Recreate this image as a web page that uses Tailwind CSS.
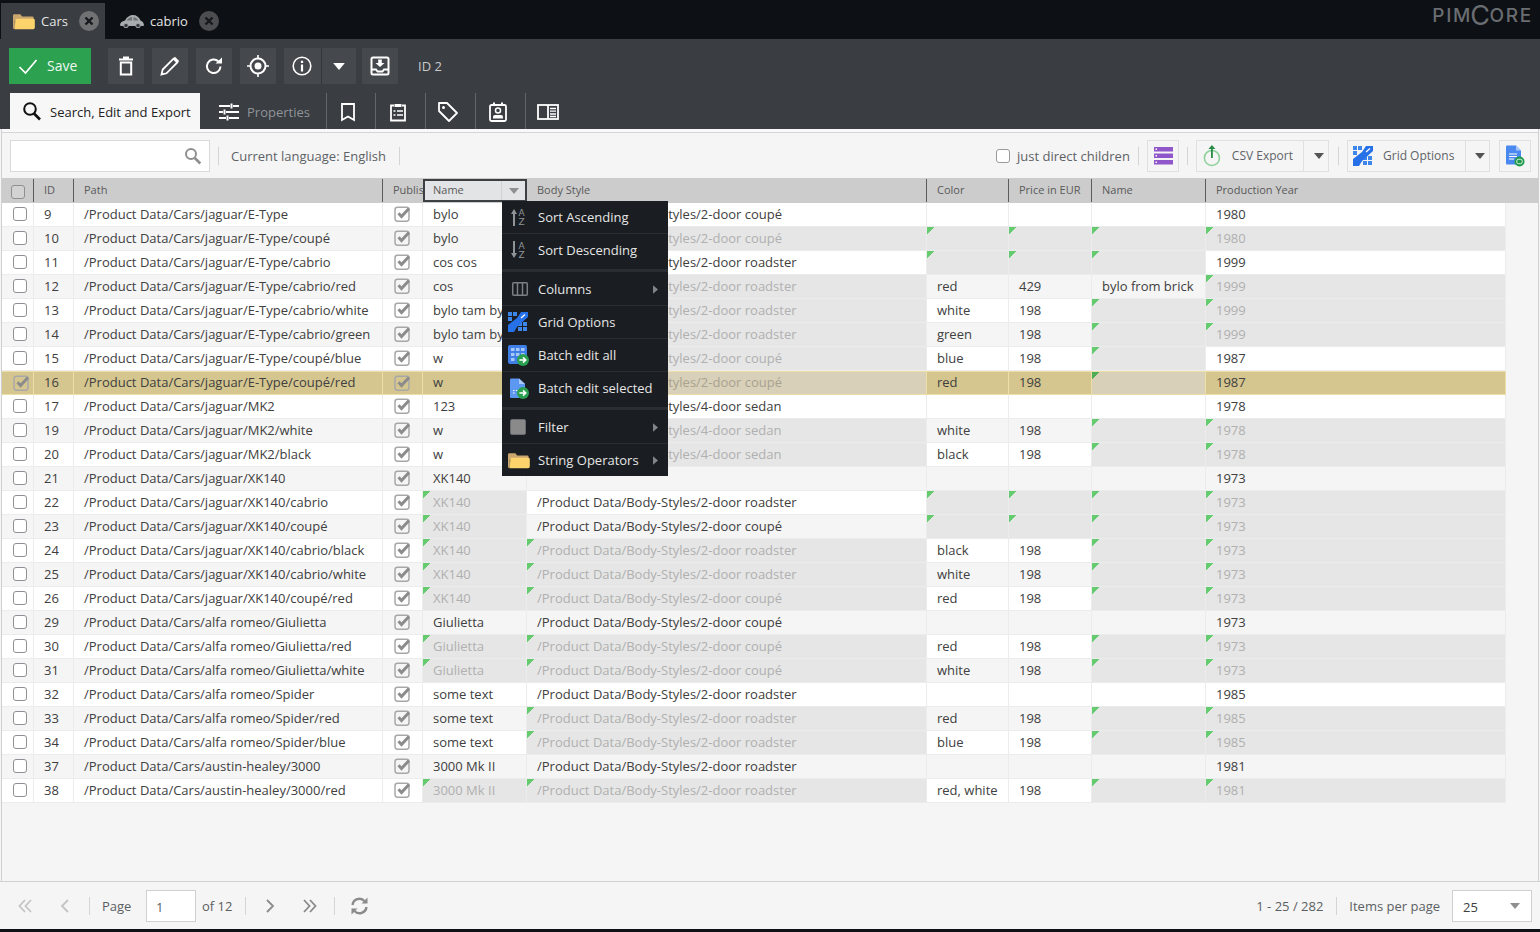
<!DOCTYPE html>
<html lang="en">
<head>
<meta charset="utf-8">
<title>Pimcore</title>
<script src="https://cdn.jsdelivr.net/npm/@tailwindcss/browser@4"></script>
</head>
<body class="m-0 bg-[#0d1014]">
<svg class="hidden" xmlns="http://www.w3.org/2000/svg">
  <symbol id="folder" viewBox="0 0 24 18"><path d="M0 2.500Q0 1 1.500 1H8l2 2.500h11Q22.500 3.500 22.500 5v3H2v9H1Q0 17 0 16z" fill="#c9a76f"/><path d="M2.500 7.500Q2.800 6 4.500 6H22q1.800 0 1.800 1.500V15.500Q23.800 17.500 22 17.500H1.500Q2 16.500 2 15z" fill="#fdd36c"/></symbol>
  <symbol id="pub" viewBox="0 0 17 17"><rect x="1" y="2.300" width="14" height="14" rx="2.500" fill="none" stroke="#a8a8a8" stroke-width="1.500"/><path d="M4.500 8.300l3 3.200 7.500-8" fill="none" stroke="#8c8c8c" stroke-width="3"/></symbol>
  <symbol id="gridopt" viewBox="0 0 20 20"><path d="M0 0h4v4H0zM5 0h4v4H5zM0 5h4v4H0zM10 10h4v4h-4zM15 10h4v4h-4zM10 15h4v4h-4zM15 15h4v4h-4z" fill="#3f86ea"/><path d="M0 13L9 6 13 0h7v5L9 15l-3 5H0z" fill="#2670e8"/><path d="M13 6l4-3.500" stroke="#fff" stroke-width="1.200"/></symbol>
  <symbol id="go" viewBox="0 0 10 10"><circle cx="5" cy="5" r="5" fill="#29a04f"/><path d="M2 5h5M5 2.800L7.300 5 5 7.200" fill="none" stroke="#fff" stroke-width="1.300"/></symbol>
  <symbol id="caret" viewBox="0 0 10 6"><path d="M0 0h10L5 6z"/></symbol>
  <symbol id="mr" viewBox="0 0 6 10"><path d="M0 0l6 5-6 5z" fill="#80858a"/></symbol>
  <symbol id="dbl" viewBox="0 0 14 14"><path d="M7 1L1.500 7 7 13M13 1L7.500 7 13 13" fill="none" stroke="currentColor" stroke-width="1.800"/></symbol>
</svg>

<div class="relative w-[1540px] h-[932px] overflow-hidden flex flex-col bg-[#f5f5f5] text-[13px] leading-[18px] text-[#404040] font-['Open_Sans',sans-serif]">

  <!-- top tabs -->
  <div class="h-[39px] shrink-0 bg-[#0d1014] flex items-end relative">
    <div class="ml-px w-[104px] h-[36px] bg-[#3a3d41] flex items-center text-[#e4e4e4]">
      <svg class="w-[22px] h-[17px] ml-3" ><use href="#folder"/></svg>
      <span class="ml-[6px]">Cars</span>
      <span class="ml-[11px] w-5 h-5 rounded-full bg-[#6f7173] flex items-center justify-center"><svg class="w-[10px] h-[10px]" viewBox="0 0 10 10"><path d="M1.500 1.500l7 7M8.500 1.500l-7 7" stroke="#16191c" stroke-width="2.400"/></svg></span>
    </div>
    <div class="h-[36px] flex items-center text-[#e4e4e4]">
      <svg class="w-[24px] h-[14px] ml-[15px]" viewBox="0 0 24 14"><path d="M0 10.500Q.5 7.500 5 6.500 8 1 13 1q5 0 7.500 5.500 3 .8 3.500 4l-.5 1.500H.5z" fill="#a9acaf"/><path d="M6.500 6.500Q9 3 12 3v3.500zM13.500 3q3 .2 5 3.500h-5z" fill="#6f7276"/><circle cx="6" cy="11.500" r="2.300" fill="#3a3d41" stroke="#a9acaf"/><circle cx="18" cy="11.500" r="2.300" fill="#3a3d41" stroke="#a9acaf"/></svg>
      <span class="ml-[6px]">cabrio</span>
      <span class="ml-[11px] w-5 h-5 rounded-full bg-[#4b4d50] flex items-center justify-center"><svg class="w-[10px] h-[10px]" viewBox="0 0 10 10"><path d="M1.500 1.500l7 7M8.500 1.500l-7 7" stroke="#16191c" stroke-width="2.400"/></svg></span>
    </div>
    <div class="absolute right-[7px] top-[5px] text-[#6a6d71] text-[19px] leading-[22px] font-['Inter',sans-serif] font-medium tracking-[1.7px] flex items-center">PIM<span class="text-[27px] leading-[22px] font-normal mx-[-2px]">C</span>ORE</div>
  </div>

  <!-- object toolbar -->
  <div class="h-[54px] shrink-0 bg-[#3a3d41] pl-[9px] pt-[9px] flex items-start text-white">
    <div class="w-[82px] h-9 bg-[#2ca250] flex items-center pl-[9px]">
      <svg class="w-5 h-5" viewBox="0 0 20 20"><path d="M1.500 11l6 6L18.500 4" fill="none" stroke="#fff" stroke-width="1.700"/></svg>
      <span class="ml-[9px] text-sm text-[#eef7f0]">Save</span>
    </div>
    <div class="ml-[17px] w-9 h-9 bg-[#45484c] flex items-center justify-center">
      <svg class="w-5 h-5" viewBox="0 0 20 20"><path d="M3 3.500h14M7 1.500h6" stroke="#fff" stroke-width="2" fill="none"/><path d="M4.800 6.500h10.400v12H4.800z" stroke="#fff" stroke-width="2" fill="none"/></svg>
    </div>
    <div class="ml-2 w-9 h-9 bg-[#45484c] flex items-center justify-center">
      <svg class="w-5 h-5" viewBox="0 0 20 20"><path d="M1.500 18.500l1.200-5L13.500 2.700l3.800 3.800L6.500 17.300z" fill="none" stroke="#fff" stroke-width="1.800"/><path d="M15 .8l4.200 4.200-1.500 1.500-4.200-4.200z" fill="#fff"/></svg>
    </div>
    <div class="ml-2 w-9 h-9 bg-[#45484c] flex items-center justify-center">
      <svg class="w-5 h-5" viewBox="0 0 20 20"><path d="M16.500 10.500a6.800 6.800 0 1 1-2.200-5.300" fill="none" stroke="#fff" stroke-width="2"/><path d="M11.500 7.500h6.500V1.500z" fill="#fff"/></svg>
    </div>
    <div class="ml-2 w-9 h-9 bg-[#45484c] flex items-center justify-center">
      <svg class="w-[22px] h-[22px]" viewBox="0 0 22 22"><circle cx="11" cy="11" r="7.500" fill="none" stroke="#fff" stroke-width="2"/><circle cx="11" cy="11" r="3.500" fill="#fff"/><path d="M11 0v3.500M11 18.500V22M0 11h3.500M18.500 11H22" stroke="#fff" stroke-width="1.600"/></svg>
    </div>
    <div class="ml-2 w-[38px] h-9 pr-px bg-[#45484c] flex items-center justify-center border-r border-[#34373a]">
      <svg class="w-5 h-5" viewBox="0 0 20 20"><circle cx="10" cy="10" r="8.800" fill="none" stroke="#fff" stroke-width="1.600"/><path d="M8.900 4.800h2.200v2.200H8.900zM8.900 8.500h2.200v7H8.900z" fill="#fff"/></svg>
    </div>
    <div class="w-[34px] h-9 bg-[#45484c] flex items-center justify-center">
      <svg class="w-[12px] h-[7px] fill-white"><use href="#caret"/></svg>
    </div>
    <div class="ml-[6px] w-9 h-9 bg-[#45484c] flex items-center justify-center">
      <svg class="w-5 h-5" viewBox="0 0 20 20"><rect x="1.500" y="1.500" width="17" height="17" rx="1.500" fill="none" stroke="#fff" stroke-width="2"/><path d="M8.200 3.500h3.600v3.500h2.700L10 11 5.500 7h2.700z" fill="#fff"/><path d="M2 13.500h4l1.500 2h5l1.500-2h4" fill="none" stroke="#fff" stroke-width="1.800"/></svg>
    </div>
    <span class="ml-5 mt-[9px] text-[#c9cbcd]">ID 2</span>
  </div>

  <!-- sub tabs -->
  <div class="h-[36px] shrink-0 bg-[#3a3d41] pl-[10px] flex items-stretch">
    <div class="w-[190px] bg-[#f7f7f7] flex items-center pl-3 text-[#222]">
      <svg class="w-5 h-5" viewBox="0 0 20 20"><circle cx="8" cy="8" r="5.800" fill="none" stroke="#111" stroke-width="2"/><path d="M12 12.500l6 6" stroke="#111" stroke-width="2.600"/></svg>
      <span class="ml-2 mt-[2px]">Search, Edit and Export</span>
    </div>
    <div class="w-[127px] flex items-center border-r border-[#63666a] pl-[19px] text-[#8f9499]">
      <svg class="w-5 h-5 mt-px" viewBox="0 0 20 20"><path d="M0 4h11M14 4h6M0 10h4M7 10h13M0 16h7M10 16h10M12.500 1.500v5M5.500 7.500v5M8.500 13.500v5" stroke="#fff" stroke-width="2" fill="none"/></svg>
      <span class="ml-2 mt-[2px]">Properties</span>
    </div>
    <div class="w-[49px] pr-[6px] pt-px flex items-center justify-center border-r border-[#63666a]">
      <svg class="w-5 h-5" viewBox="0 0 20 20"><path d="M4 2h12v16l-6-3.500L4 18z" fill="none" stroke="#fff" stroke-width="1.800"/></svg>
    </div>
    <div class="w-[50px] pr-[6px] pt-px flex items-center justify-center border-r border-[#63666a]">
      <svg class="w-5 h-5" viewBox="0 0 20 20"><path d="M6 3.500H3v15h14v-15h-3" fill="none" stroke="#fff" stroke-width="1.800"/><path d="M6.500 2h7v3h-7z" fill="#fff"/><path d="M5.500 9h2M9 9h6M5.500 13h2M9 13h6" stroke="#fff" stroke-width="1.500"/></svg>
    </div>
    <div class="w-[50px] pr-[6px] pt-px flex items-center justify-center border-r border-[#63666a]">
      <svg class="w-[22px] h-[22px]" viewBox="0 0 22 22"><path d="M2 2h8l10 10-8 8L2 10z" fill="none" stroke="#fff" stroke-width="1.800" stroke-linejoin="round"/><circle cx="6.500" cy="6.500" r="1.500" fill="#fff"/></svg>
    </div>
    <div class="w-[50px] pr-[6px] pt-px flex items-center justify-center border-r border-[#63666a]">
      <svg class="w-5 h-5" viewBox="0 0 20 20"><rect x="2" y="3" width="16" height="16" rx="1.500" fill="none" stroke="#fff" stroke-width="1.800"/><path d="M6 .5v3M14 .5v3" stroke="#fff" stroke-width="2"/><circle cx="10" cy="8.500" r="2.500" fill="none" stroke="#fff" stroke-width="1.500"/><path d="M5 16.500v-1.500q0-2 2-2h6q2 0 2 2v1.500z" fill="#fff"/></svg>
    </div>
    <div class="w-[48px] pr-[4px] pt-px flex items-center justify-center">
      <svg class="w-[22px] h-[18px]" viewBox="0 0 22 18"><rect x="1" y="2" width="20" height="14" fill="none" stroke="#fff" stroke-width="1.800"/><path d="M11 2v14" stroke="#fff" stroke-width="1.800"/><path d="M13 5.500h6M13 8.200h6M13 11h6M13 13.500h6" stroke="#fff" stroke-width="1.300"/></svg>
    </div>
  </div>

  <!-- panel -->
  <div class="flex-1 min-h-0 flex flex-col mx-px border-x border-[#d0d0d0]">
    <div class="h-[3px] shrink-0 bg-[#f9f9f9] border-b border-[#d5d5d5] box-content"></div>

    <!-- grid toolbar -->
    <div class="h-[45px] shrink-0 pl-2 pr-[7px] pt-[7px] flex items-start text-[#606468]">
      <div class="w-[200px] h-8 bg-white border border-[#d9d9d9] flex items-center justify-end pr-[7px]">
        <svg class="w-[18px] h-[18px]" viewBox="0 0 18 18"><circle cx="7" cy="7" r="5" fill="none" stroke="#8f8f8f" stroke-width="2"/><path d="M10.800 11l5.500 5.500" stroke="#8f8f8f" stroke-width="2.600"/></svg>
      </div>
      <span class="ml-2 mt-[7px] w-px h-[18px] bg-[#d5d5d5]"></span>
      <span class="ml-3 mt-[7px] w-[156px] text-[#5e6266]">Current language: English</span>
      <span class="ml-3 mt-[7px] w-px h-[18px] bg-[#d5d5d5]"></span>

      <span class="ml-auto mt-[9px] w-[14px] h-[14px] bg-white border-[1.5px] border-[#9a9a9a] rounded-[3px]"></span>
      <span class="ml-[7px] mt-[7px] w-[113px] whitespace-nowrap text-[#5e6266]">just direct children</span>
      <span class="ml-[8px] mt-[7px] w-px h-[18px] bg-[#d5d5d5]"></span>
      <div class="ml-2 w-8 h-8 border border-[#e0e0e0] flex items-center justify-center">
        <svg class="w-[19px] h-[18px]" viewBox="0 0 19 18"><path d="M0 0h19v4.500H0zM0 6.500h19V11H0zM0 13h19v4.500H0z" fill="#8f57c9"/><path d="M1.500 1.500h1.500V3H1.500zM1.500 8h1.500v1.500H1.500zM1.500 14.500h1.500V16H1.500z" fill="#fff"/></svg>
      </div>
      <span class="ml-2 mt-[7px] w-px h-[18px] bg-[#d5d5d5]"></span>
      <div class="ml-2 w-[133px] h-8 border border-[#e0e0e0] flex items-center text-xs">
        <svg class="ml-[6px] w-[18px] h-[24px]" viewBox="0 0 18 24"><circle cx="9" cy="14" r="7.600" fill="none" stroke="#8ed19b" stroke-width="1.600"/><path d="M9 14V3" stroke="#268a45" stroke-width="1.800"/><path d="M5.500 5L9 .8 12.500 5z" fill="#268a45"/></svg>
        <span class="ml-[11px] w-[72px] whitespace-nowrap">CSV Export</span>
        <span class="w-[25px] h-full pl-[5px] border-l border-[#e0e0e0] flex items-center justify-center"><svg class="w-[10px] h-[6px] fill-[#555]"><use href="#caret"/></svg></span>
      </div>
      <span class="ml-[9px] mt-[7px] w-px h-[18px] bg-[#d5d5d5]"></span>
      <div class="ml-2 w-[143px] h-8 border border-[#e0e0e0] flex items-center text-xs">
        <svg class="ml-[5px] w-5 h-5"><use href="#gridopt"/></svg>
        <span class="ml-[10px] w-[82px] whitespace-nowrap">Grid Options</span>
        <span class="w-[24px] h-full pl-[4px] border-l border-[#e0e0e0] flex items-center justify-center"><svg class="w-[10px] h-[6px] fill-[#555]"><use href="#caret"/></svg></span>
      </div>
      <div class="ml-[9px] w-8 h-8 border border-[#e0e0e0] flex items-center justify-center">
        <svg class="w-5 h-[22px]" viewBox="0 0 20 22"><path d="M1 1.500Q1 .5 2 .5h9l5 5v14H2q-1 0-1-1z" fill="#4a8af0"/><path d="M11 .5l5 5h-5z" fill="#a9c8f8"/><path d="M4 9h8M4 11.500h8M4 14h5" stroke="#fff" stroke-width="1"/><circle cx="14.500" cy="16.500" r="5" fill="#1f9a4c"/><rect x="11.800" y="14.300" width="5.400" height="4.400" rx="1.500" fill="none" stroke="#d7f3df" stroke-width="1"/></svg>
      </div>
    </div>

    <!-- header -->
    <div class="h-[25px] shrink-0 bg-[#cccccc] flex text-[11px] leading-[22px] text-[#5a5a5a] whitespace-nowrap">
      <div class="w-[32px] border-r border-[#5a5d60] my-px flex items-center"><span class="ml-[9px] mt-[2px] w-[14px] h-[14px] bg-[#d3d3d3] border-[1.5px] border-[#8f8f8f] rounded-[3px]"></span></div>
      <div class="w-[40px] border-r border-[#5a5d60] my-px pl-[10px]">ID</div>
      <div class="w-[309px] border-r border-[#5a5d60] my-px pl-[10px]">Path</div>
      <div class="w-[40px] my-px pl-[10px] overflow-hidden">Published</div>
      <div class="w-[104px] border-2 border-[#3d4043] bg-[#e2e4e5] flex leading-[18px] my-px">
        <span class="flex-1 pl-2">Name</span>
        <span class="w-[24px] border-l border-[#cfd1d3] flex items-center justify-center"><svg class="w-[10px] h-[6px] fill-[#8f8f8f]"><use href="#caret"/></svg></span>
      </div>
      <div class="w-[400px] border-r border-[#5a5d60] my-px pl-[10px]">Body Style</div>
      <div class="w-[82px] border-r border-[#5a5d60] my-px pl-[10px]">Color</div>
      <div class="w-[83px] border-r border-[#5a5d60] my-px pl-[10px]">Price in EUR</div>
      <div class="w-[114px] border-r border-[#5a5d60] my-px pl-[10px]">Name</div>
      <div class="w-[300px] pl-[10px] my-px">Production Year</div>
    </div>

    <!-- rows -->
    <div class="flex-1 min-h-0 overflow-hidden">
      <table class="table-fixed w-[1504px] border-separate border-spacing-0 whitespace-nowrap [&_td]:h-6 [&_td]:px-[10px] [&_td]:pt-0 [&_td]:pb-[2px] [&_td]:border-r [&_td]:border-b [&_td]:border-[#ececec] [&_td]:overflow-hidden">
        <colgroup><col class="w-[32px]"><col class="w-[40px]"><col class="w-[309px]"><col class="w-[40px]"><col class="w-[104px]"><col class="w-[400px]"><col class="w-[82px]"><col class="w-[83px]"><col class="w-[114px]"><col class="w-[300px]"></colgroup>
        <tbody>
<tr class="bg-white"><td><span class="block ml-px w-[14px] h-[14px] bg-white border-[1.5px] border-[#8f8f95] rounded-[3px]"></span></td><td>9</td><td>/Product Data/Cars/jaguar/E-Type</td><td><svg class="block ml-px w-[17px] h-[17px]"><use href="#pub"/></svg></td><td>bylo</td><td>/Product Data/Body-Styles/2-door coupé</td><td></td><td></td><td></td><td>1980</td></tr>
<tr class="bg-[#f5f5f5]"><td><span class="block ml-px w-[14px] h-[14px] bg-white border-[1.5px] border-[#8f8f95] rounded-[3px]"></span></td><td>10</td><td>/Product Data/Cars/jaguar/E-Type/coupé</td><td><svg class="block ml-px w-[17px] h-[17px]"><use href="#pub"/></svg></td><td>bylo</td><td class="bg-[linear-gradient(135deg,#64cc6e_5px,#e6e6e6_5px)] text-[#b0b0b0]">/Product Data/Body-Styles/2-door coupé</td><td class="bg-[linear-gradient(135deg,#64cc6e_5px,#e6e6e6_5px)] text-[#b0b0b0]"></td><td class="bg-[linear-gradient(135deg,#64cc6e_5px,#e6e6e6_5px)] text-[#b0b0b0]"></td><td class="bg-[linear-gradient(135deg,#64cc6e_5px,#e6e6e6_5px)] text-[#b0b0b0]"></td><td class="bg-[linear-gradient(135deg,#64cc6e_5px,#e6e6e6_5px)] text-[#b0b0b0]">1980</td></tr>
<tr class="bg-white"><td><span class="block ml-px w-[14px] h-[14px] bg-white border-[1.5px] border-[#8f8f95] rounded-[3px]"></span></td><td>11</td><td>/Product Data/Cars/jaguar/E-Type/cabrio</td><td><svg class="block ml-px w-[17px] h-[17px]"><use href="#pub"/></svg></td><td>cos cos</td><td>/Product Data/Body-Styles/2-door roadster</td><td class="bg-[linear-gradient(135deg,#64cc6e_5px,#e6e6e6_5px)] text-[#b0b0b0]"></td><td class="bg-[linear-gradient(135deg,#64cc6e_5px,#e6e6e6_5px)] text-[#b0b0b0]"></td><td class="bg-[linear-gradient(135deg,#64cc6e_5px,#e6e6e6_5px)] text-[#b0b0b0]"></td><td>1999</td></tr>
<tr class="bg-[#f5f5f5]"><td><span class="block ml-px w-[14px] h-[14px] bg-white border-[1.5px] border-[#8f8f95] rounded-[3px]"></span></td><td>12</td><td>/Product Data/Cars/jaguar/E-Type/cabrio/red</td><td><svg class="block ml-px w-[17px] h-[17px]"><use href="#pub"/></svg></td><td>cos</td><td class="bg-[linear-gradient(135deg,#64cc6e_5px,#e6e6e6_5px)] text-[#b0b0b0]">/Product Data/Body-Styles/2-door roadster</td><td>red</td><td>429</td><td>bylo from brick</td><td class="bg-[linear-gradient(135deg,#64cc6e_5px,#e6e6e6_5px)] text-[#b0b0b0]">1999</td></tr>
<tr class="bg-white"><td><span class="block ml-px w-[14px] h-[14px] bg-white border-[1.5px] border-[#8f8f95] rounded-[3px]"></span></td><td>13</td><td>/Product Data/Cars/jaguar/E-Type/cabrio/white</td><td><svg class="block ml-px w-[17px] h-[17px]"><use href="#pub"/></svg></td><td>bylo tam bylo</td><td class="bg-[linear-gradient(135deg,#64cc6e_5px,#e6e6e6_5px)] text-[#b0b0b0]">/Product Data/Body-Styles/2-door roadster</td><td>white</td><td>198</td><td class="bg-[linear-gradient(135deg,#64cc6e_5px,#e6e6e6_5px)] text-[#b0b0b0]"></td><td class="bg-[linear-gradient(135deg,#64cc6e_5px,#e6e6e6_5px)] text-[#b0b0b0]">1999</td></tr>
<tr class="bg-[#f5f5f5]"><td><span class="block ml-px w-[14px] h-[14px] bg-white border-[1.5px] border-[#8f8f95] rounded-[3px]"></span></td><td>14</td><td>/Product Data/Cars/jaguar/E-Type/cabrio/green</td><td><svg class="block ml-px w-[17px] h-[17px]"><use href="#pub"/></svg></td><td>bylo tam bylo</td><td class="bg-[linear-gradient(135deg,#64cc6e_5px,#e6e6e6_5px)] text-[#b0b0b0]">/Product Data/Body-Styles/2-door roadster</td><td>green</td><td>198</td><td class="bg-[linear-gradient(135deg,#64cc6e_5px,#e6e6e6_5px)] text-[#b0b0b0]"></td><td class="bg-[linear-gradient(135deg,#64cc6e_5px,#e6e6e6_5px)] text-[#b0b0b0]">1999</td></tr>
<tr class="bg-white"><td><span class="block ml-px w-[14px] h-[14px] bg-white border-[1.5px] border-[#8f8f95] rounded-[3px]"></span></td><td>15</td><td>/Product Data/Cars/jaguar/E-Type/coupé/blue</td><td><svg class="block ml-px w-[17px] h-[17px]"><use href="#pub"/></svg></td><td>w</td><td class="bg-[linear-gradient(135deg,#64cc6e_5px,#e6e6e6_5px)] text-[#b0b0b0]">/Product Data/Body-Styles/2-door coupé</td><td>blue</td><td>198</td><td class="bg-[linear-gradient(135deg,#64cc6e_5px,#e6e6e6_5px)] text-[#b0b0b0]"></td><td>1987</td></tr>
<tr class="bg-[#d5c68f] [&_td]:border-[#ecdfa8]! [&_td]:border-t"><td><svg class="block ml-px w-[17px] h-[17px]"><use href="#pub"/></svg></td><td>16</td><td>/Product Data/Cars/jaguar/E-Type/coupé/red</td><td><svg class="block ml-px w-[17px] h-[17px]"><use href="#pub"/></svg></td><td>w</td><td class="bg-[linear-gradient(135deg,#64cc6e_5px,#d8d0b8_5px)] text-[#a8a290]">/Product Data/Body-Styles/2-door coupé</td><td>red</td><td>198</td><td class="bg-[linear-gradient(135deg,#4fae55_5px,#d8d0b8_5px)]"></td><td>1987</td></tr>
<tr class="bg-white"><td><span class="block ml-px w-[14px] h-[14px] bg-white border-[1.5px] border-[#8f8f95] rounded-[3px]"></span></td><td>17</td><td>/Product Data/Cars/jaguar/MK2</td><td><svg class="block ml-px w-[17px] h-[17px]"><use href="#pub"/></svg></td><td>123</td><td>/Product Data/Body-Styles/4-door sedan</td><td></td><td></td><td></td><td>1978</td></tr>
<tr class="bg-[#f5f5f5]"><td><span class="block ml-px w-[14px] h-[14px] bg-white border-[1.5px] border-[#8f8f95] rounded-[3px]"></span></td><td>19</td><td>/Product Data/Cars/jaguar/MK2/white</td><td><svg class="block ml-px w-[17px] h-[17px]"><use href="#pub"/></svg></td><td>w</td><td class="bg-[linear-gradient(135deg,#64cc6e_5px,#e6e6e6_5px)] text-[#b0b0b0]">/Product Data/Body-Styles/4-door sedan</td><td>white</td><td>198</td><td class="bg-[linear-gradient(135deg,#64cc6e_5px,#e6e6e6_5px)] text-[#b0b0b0]"></td><td class="bg-[linear-gradient(135deg,#64cc6e_5px,#e6e6e6_5px)] text-[#b0b0b0]">1978</td></tr>
<tr class="bg-white"><td><span class="block ml-px w-[14px] h-[14px] bg-white border-[1.5px] border-[#8f8f95] rounded-[3px]"></span></td><td>20</td><td>/Product Data/Cars/jaguar/MK2/black</td><td><svg class="block ml-px w-[17px] h-[17px]"><use href="#pub"/></svg></td><td>w</td><td class="bg-[linear-gradient(135deg,#64cc6e_5px,#e6e6e6_5px)] text-[#b0b0b0]">/Product Data/Body-Styles/4-door sedan</td><td>black</td><td>198</td><td class="bg-[linear-gradient(135deg,#64cc6e_5px,#e6e6e6_5px)] text-[#b0b0b0]"></td><td class="bg-[linear-gradient(135deg,#64cc6e_5px,#e6e6e6_5px)] text-[#b0b0b0]">1978</td></tr>
<tr class="bg-[#f5f5f5]"><td><span class="block ml-px w-[14px] h-[14px] bg-white border-[1.5px] border-[#8f8f95] rounded-[3px]"></span></td><td>21</td><td>/Product Data/Cars/jaguar/XK140</td><td><svg class="block ml-px w-[17px] h-[17px]"><use href="#pub"/></svg></td><td>XK140</td><td></td><td></td><td></td><td></td><td>1973</td></tr>
<tr class="bg-white"><td><span class="block ml-px w-[14px] h-[14px] bg-white border-[1.5px] border-[#8f8f95] rounded-[3px]"></span></td><td>22</td><td>/Product Data/Cars/jaguar/XK140/cabrio</td><td><svg class="block ml-px w-[17px] h-[17px]"><use href="#pub"/></svg></td><td class="bg-[linear-gradient(135deg,#64cc6e_5px,#e6e6e6_5px)] text-[#b0b0b0]">XK140</td><td>/Product Data/Body-Styles/2-door roadster</td><td class="bg-[linear-gradient(135deg,#64cc6e_5px,#e6e6e6_5px)] text-[#b0b0b0]"></td><td class="bg-[linear-gradient(135deg,#64cc6e_5px,#e6e6e6_5px)] text-[#b0b0b0]"></td><td class="bg-[linear-gradient(135deg,#64cc6e_5px,#e6e6e6_5px)] text-[#b0b0b0]"></td><td class="bg-[linear-gradient(135deg,#64cc6e_5px,#e6e6e6_5px)] text-[#b0b0b0]">1973</td></tr>
<tr class="bg-[#f5f5f5]"><td><span class="block ml-px w-[14px] h-[14px] bg-white border-[1.5px] border-[#8f8f95] rounded-[3px]"></span></td><td>23</td><td>/Product Data/Cars/jaguar/XK140/coupé</td><td><svg class="block ml-px w-[17px] h-[17px]"><use href="#pub"/></svg></td><td class="bg-[linear-gradient(135deg,#64cc6e_5px,#e6e6e6_5px)] text-[#b0b0b0]">XK140</td><td>/Product Data/Body-Styles/2-door coupé</td><td class="bg-[linear-gradient(135deg,#64cc6e_5px,#e6e6e6_5px)] text-[#b0b0b0]"></td><td class="bg-[linear-gradient(135deg,#64cc6e_5px,#e6e6e6_5px)] text-[#b0b0b0]"></td><td class="bg-[linear-gradient(135deg,#64cc6e_5px,#e6e6e6_5px)] text-[#b0b0b0]"></td><td class="bg-[linear-gradient(135deg,#64cc6e_5px,#e6e6e6_5px)] text-[#b0b0b0]">1973</td></tr>
<tr class="bg-white"><td><span class="block ml-px w-[14px] h-[14px] bg-white border-[1.5px] border-[#8f8f95] rounded-[3px]"></span></td><td>24</td><td>/Product Data/Cars/jaguar/XK140/cabrio/black</td><td><svg class="block ml-px w-[17px] h-[17px]"><use href="#pub"/></svg></td><td class="bg-[linear-gradient(135deg,#64cc6e_5px,#e6e6e6_5px)] text-[#b0b0b0]">XK140</td><td class="bg-[linear-gradient(135deg,#64cc6e_5px,#e6e6e6_5px)] text-[#b0b0b0]">/Product Data/Body-Styles/2-door roadster</td><td>black</td><td>198</td><td class="bg-[linear-gradient(135deg,#64cc6e_5px,#e6e6e6_5px)] text-[#b0b0b0]"></td><td class="bg-[linear-gradient(135deg,#64cc6e_5px,#e6e6e6_5px)] text-[#b0b0b0]">1973</td></tr>
<tr class="bg-[#f5f5f5]"><td><span class="block ml-px w-[14px] h-[14px] bg-white border-[1.5px] border-[#8f8f95] rounded-[3px]"></span></td><td>25</td><td>/Product Data/Cars/jaguar/XK140/cabrio/white</td><td><svg class="block ml-px w-[17px] h-[17px]"><use href="#pub"/></svg></td><td class="bg-[linear-gradient(135deg,#64cc6e_5px,#e6e6e6_5px)] text-[#b0b0b0]">XK140</td><td class="bg-[linear-gradient(135deg,#64cc6e_5px,#e6e6e6_5px)] text-[#b0b0b0]">/Product Data/Body-Styles/2-door roadster</td><td>white</td><td>198</td><td class="bg-[linear-gradient(135deg,#64cc6e_5px,#e6e6e6_5px)] text-[#b0b0b0]"></td><td class="bg-[linear-gradient(135deg,#64cc6e_5px,#e6e6e6_5px)] text-[#b0b0b0]">1973</td></tr>
<tr class="bg-white"><td><span class="block ml-px w-[14px] h-[14px] bg-white border-[1.5px] border-[#8f8f95] rounded-[3px]"></span></td><td>26</td><td>/Product Data/Cars/jaguar/XK140/coupé/red</td><td><svg class="block ml-px w-[17px] h-[17px]"><use href="#pub"/></svg></td><td class="bg-[linear-gradient(135deg,#64cc6e_5px,#e6e6e6_5px)] text-[#b0b0b0]">XK140</td><td class="bg-[linear-gradient(135deg,#64cc6e_5px,#e6e6e6_5px)] text-[#b0b0b0]">/Product Data/Body-Styles/2-door coupé</td><td>red</td><td>198</td><td class="bg-[linear-gradient(135deg,#64cc6e_5px,#e6e6e6_5px)] text-[#b0b0b0]"></td><td class="bg-[linear-gradient(135deg,#64cc6e_5px,#e6e6e6_5px)] text-[#b0b0b0]">1973</td></tr>
<tr class="bg-[#f5f5f5]"><td><span class="block ml-px w-[14px] h-[14px] bg-white border-[1.5px] border-[#8f8f95] rounded-[3px]"></span></td><td>29</td><td>/Product Data/Cars/alfa romeo/Giulietta</td><td><svg class="block ml-px w-[17px] h-[17px]"><use href="#pub"/></svg></td><td>Giulietta</td><td>/Product Data/Body-Styles/2-door coupé</td><td></td><td></td><td></td><td>1973</td></tr>
<tr class="bg-white"><td><span class="block ml-px w-[14px] h-[14px] bg-white border-[1.5px] border-[#8f8f95] rounded-[3px]"></span></td><td>30</td><td>/Product Data/Cars/alfa romeo/Giulietta/red</td><td><svg class="block ml-px w-[17px] h-[17px]"><use href="#pub"/></svg></td><td class="bg-[linear-gradient(135deg,#64cc6e_5px,#e6e6e6_5px)] text-[#b0b0b0]">Giulietta</td><td class="bg-[linear-gradient(135deg,#64cc6e_5px,#e6e6e6_5px)] text-[#b0b0b0]">/Product Data/Body-Styles/2-door coupé</td><td>red</td><td>198</td><td class="bg-[linear-gradient(135deg,#64cc6e_5px,#e6e6e6_5px)] text-[#b0b0b0]"></td><td class="bg-[linear-gradient(135deg,#64cc6e_5px,#e6e6e6_5px)] text-[#b0b0b0]">1973</td></tr>
<tr class="bg-[#f5f5f5]"><td><span class="block ml-px w-[14px] h-[14px] bg-white border-[1.5px] border-[#8f8f95] rounded-[3px]"></span></td><td>31</td><td>/Product Data/Cars/alfa romeo/Giulietta/white</td><td><svg class="block ml-px w-[17px] h-[17px]"><use href="#pub"/></svg></td><td class="bg-[linear-gradient(135deg,#64cc6e_5px,#e6e6e6_5px)] text-[#b0b0b0]">Giulietta</td><td class="bg-[linear-gradient(135deg,#64cc6e_5px,#e6e6e6_5px)] text-[#b0b0b0]">/Product Data/Body-Styles/2-door coupé</td><td>white</td><td>198</td><td class="bg-[linear-gradient(135deg,#64cc6e_5px,#e6e6e6_5px)] text-[#b0b0b0]"></td><td class="bg-[linear-gradient(135deg,#64cc6e_5px,#e6e6e6_5px)] text-[#b0b0b0]">1973</td></tr>
<tr class="bg-white"><td><span class="block ml-px w-[14px] h-[14px] bg-white border-[1.5px] border-[#8f8f95] rounded-[3px]"></span></td><td>32</td><td>/Product Data/Cars/alfa romeo/Spider</td><td><svg class="block ml-px w-[17px] h-[17px]"><use href="#pub"/></svg></td><td>some text</td><td>/Product Data/Body-Styles/2-door roadster</td><td></td><td></td><td></td><td>1985</td></tr>
<tr class="bg-[#f5f5f5]"><td><span class="block ml-px w-[14px] h-[14px] bg-white border-[1.5px] border-[#8f8f95] rounded-[3px]"></span></td><td>33</td><td>/Product Data/Cars/alfa romeo/Spider/red</td><td><svg class="block ml-px w-[17px] h-[17px]"><use href="#pub"/></svg></td><td>some text</td><td class="bg-[linear-gradient(135deg,#64cc6e_5px,#e6e6e6_5px)] text-[#b0b0b0]">/Product Data/Body-Styles/2-door roadster</td><td>red</td><td>198</td><td class="bg-[linear-gradient(135deg,#64cc6e_5px,#e6e6e6_5px)] text-[#b0b0b0]"></td><td class="bg-[linear-gradient(135deg,#64cc6e_5px,#e6e6e6_5px)] text-[#b0b0b0]">1985</td></tr>
<tr class="bg-white"><td><span class="block ml-px w-[14px] h-[14px] bg-white border-[1.5px] border-[#8f8f95] rounded-[3px]"></span></td><td>34</td><td>/Product Data/Cars/alfa romeo/Spider/blue</td><td><svg class="block ml-px w-[17px] h-[17px]"><use href="#pub"/></svg></td><td>some text</td><td class="bg-[linear-gradient(135deg,#64cc6e_5px,#e6e6e6_5px)] text-[#b0b0b0]">/Product Data/Body-Styles/2-door roadster</td><td>blue</td><td>198</td><td class="bg-[linear-gradient(135deg,#64cc6e_5px,#e6e6e6_5px)] text-[#b0b0b0]"></td><td class="bg-[linear-gradient(135deg,#64cc6e_5px,#e6e6e6_5px)] text-[#b0b0b0]">1985</td></tr>
<tr class="bg-[#f5f5f5]"><td><span class="block ml-px w-[14px] h-[14px] bg-white border-[1.5px] border-[#8f8f95] rounded-[3px]"></span></td><td>37</td><td>/Product Data/Cars/austin-healey/3000</td><td><svg class="block ml-px w-[17px] h-[17px]"><use href="#pub"/></svg></td><td>3000 Mk II</td><td>/Product Data/Body-Styles/2-door roadster</td><td></td><td></td><td></td><td>1981</td></tr>
<tr class="bg-white"><td><span class="block ml-px w-[14px] h-[14px] bg-white border-[1.5px] border-[#8f8f95] rounded-[3px]"></span></td><td>38</td><td>/Product Data/Cars/austin-healey/3000/red</td><td><svg class="block ml-px w-[17px] h-[17px]"><use href="#pub"/></svg></td><td class="bg-[linear-gradient(135deg,#64cc6e_5px,#e6e6e6_5px)] text-[#b0b0b0]">3000 Mk II</td><td class="bg-[linear-gradient(135deg,#64cc6e_5px,#e6e6e6_5px)] text-[#b0b0b0]">/Product Data/Body-Styles/2-door roadster</td><td>red, white</td><td>198</td><td class="bg-[linear-gradient(135deg,#64cc6e_5px,#e6e6e6_5px)] text-[#b0b0b0]"></td><td class="bg-[linear-gradient(135deg,#64cc6e_5px,#e6e6e6_5px)] text-[#b0b0b0]">1981</td></tr>
        </tbody>
      </table>
    </div>
  </div>

  <!-- paging -->
  <div class="h-[48px] shrink-0 border-t border-[#d0d0d0] flex items-center text-[#5b5f63]">
    <svg class="ml-[18px] w-[14px] h-[14px] text-[#c4c4c4]"><use href="#dbl"/></svg>
    <svg class="ml-7 w-[10px] h-[14px] text-[#c4c4c4]" viewBox="0 0 10 14"><path d="M8 1L2 7l6 6" fill="none" stroke="currentColor" stroke-width="1.800"/></svg>
    <span class="ml-[19px] w-px h-[18px] bg-[#d5d5d5]"></span>
    <span class="ml-3 w-[44px]">Page</span>
    <span class="w-[50px] h-[32px] bg-white border border-[#d0d0d0] pl-[9px] leading-[32px]">1</span>
    <span class="ml-[6px] w-[36px] whitespace-nowrap">of 12</span>
    <span class="ml-[7px] w-px h-[18px] bg-[#d5d5d5]"></span>
    <svg class="ml-[19px] w-[10px] h-[14px] text-[#8a8a8a]" viewBox="0 0 10 14"><path d="M2 1l6 6-6 6" fill="none" stroke="currentColor" stroke-width="1.800"/></svg>
    <svg class="ml-[28px] w-[14px] h-[14px] text-[#8a8a8a] rotate-180"><use href="#dbl"/></svg>
    <span class="ml-[17px] w-px h-[18px] bg-[#d5d5d5]"></span>
    <svg class="ml-4 w-[17px] h-[18px]" viewBox="0 0 17 18"><path d="M1.500 8A7 7 0 0 1 13.500 4M15.500 10A7 7 0 0 1 3.500 14" fill="none" stroke="#8a8a8a" stroke-width="2.400"/><path d="M10.500 6.500h6V.5zM6.500 11.500h-6v6z" fill="#8a8a8a"/></svg>

    <span class="ml-auto whitespace-nowrap">1 - 25 / 282</span>
    <span class="ml-[13px] w-px h-[18px] bg-[#d5d5d5]"></span>
    <span class="ml-3 whitespace-nowrap">Items per page</span>
    <div class="ml-3 mr-2 w-[80px] h-[32px] bg-white border border-[#d0d0d0] pl-[10px] flex items-center justify-between pr-[11px] text-[#404040]">
      <span class="mt-[2px]">25</span>
      <svg class="w-[10px] h-[6px] fill-[#8f8f8f]"><use href="#caret"/></svg>
    </div>
  </div>
  <div class="h-[3px] shrink-0 bg-[#0d1014]"></div>

  <!-- header context menu -->
  <div class="absolute left-[502px] top-[201px] w-[166px] bg-[#1a1d21] text-[#e6e6e6] flex flex-col">
    <div class="h-[33px] border-b border-[#2a2d31] flex items-center">
      <svg class="ml-[8px] w-[20px] h-[20px]" viewBox="0 0 20 20"><path d="M4 5.500V19" stroke="#8f9498" stroke-width="2"/><path d="M1 7l3-5 3 5z" fill="#8f9498"/><text x="8.500" y="8.500" font-size="9" font-family="DejaVu Sans" fill="#8f9498">A</text><text x="8.500" y="18" font-size="9" font-family="DejaVu Sans" fill="#8f9498">Z</text></svg>
      <span class="ml-[8px]">Sort Ascending</span>
    </div>
    <div class="h-[33px] border-b border-transparent flex items-center">
      <svg class="ml-[8px] w-[20px] h-[20px]" viewBox="0 0 20 20"><path d="M4 1v13" stroke="#8f9498" stroke-width="2"/><path d="M1 13l3 5 3-5z" fill="#8f9498"/><text x="8.500" y="8.500" font-size="9" font-family="DejaVu Sans" fill="#8f9498">A</text><text x="8.500" y="18" font-size="9" font-family="DejaVu Sans" fill="#8f9498">Z</text></svg>
      <span class="ml-[8px]">Sort Descending</span>
    </div>
    <div class="h-[6px] flex items-center"><div class="w-full h-[3px] bg-[#2a2d31]"></div></div>
    <div class="h-[33px] border-b border-[#2a2d31] flex items-center">
      <svg class="ml-[8px] w-[20px] h-[20px]" viewBox="0 0 20 20"><rect x="2.700" y="3.700" width="14.600" height="12.600" rx="1" fill="none" stroke="#7b8085" stroke-width="1.500"/><path d="M7.500 4v12M12.500 4v12" stroke="#7b8085" stroke-width="1.500"/></svg>
      <span class="ml-[8px] flex-1">Columns</span>
      <svg class="mr-[10px] w-[5px] h-[9px]"><use href="#mr"/></svg>
    </div>
    <div class="h-[33px] border-b border-[#2a2d31] flex items-center">
      <svg class="ml-[6px] w-[20px] h-[20px]"><use href="#gridopt"/></svg>
      <span class="ml-[10px]">Grid Options</span>
    </div>
    <div class="h-[33px] border-b border-[#2a2d31] flex items-center">
      <svg class="ml-[6px] w-[21px] h-[21px]" viewBox="0 0 21 21"><rect width="19" height="19" rx="2" fill="#3f7fe8"/><path d="M3 3h3.500v3H3zM8 3h3.500v3H8zM13 3h3.500v3H13zM3 8h3.500v3H3zM8 8h3.500v3H8zM13 8h3.500v3H13zM3 13h3.500v3H3z" fill="#a9c8f8"/><svg x="9" y="9" width="12" height="12"><use href="#go"/></svg></svg>
      <span class="ml-[9px]">Batch edit all</span>
    </div>
    <div class="h-[33px] border-b border-transparent flex items-center">
      <svg class="ml-[6px] w-[21px] h-[21px]" viewBox="0 0 21 21"><path d="M2 1.500Q2 .5 3 .5h8l6 5.500v14H3q-1 0-1-1z" fill="#5c97f2"/><path d="M11 .5l6 5.500h-6z" fill="#a9c8f8"/><path d="M5 12.500h1.500M5 15h1.500M8 12.500h1.500" stroke="#fff"/><svg x="9" y="9" width="12" height="12"><use href="#go"/></svg></svg>
      <span class="ml-[9px]">Batch edit selected</span>
    </div>
    <div class="h-[6px] flex items-center"><div class="w-full h-[3px] bg-[#2a2d31]"></div></div>
    <div class="h-[33px] border-b border-[#2a2d31] flex items-center">
      <span class="ml-[8px] w-4 h-4 bg-[#8a8a8a] rounded-[2px] border border-[#6a6d70]"></span>
      <span class="ml-[12px] flex-1">Filter</span>
      <svg class="mr-[10px] w-[5px] h-[9px]"><use href="#mr"/></svg>
    </div>
    <div class="h-[32px] flex items-center">
      <svg class="ml-[6px] w-[22px] h-[17px]"><use href="#folder"/></svg>
      <span class="ml-[8px] flex-1 whitespace-nowrap">String Operators</span>
      <svg class="mr-[10px] w-[5px] h-[9px]"><use href="#mr"/></svg>
    </div>
  </div>
</div>
</body>
</html>
